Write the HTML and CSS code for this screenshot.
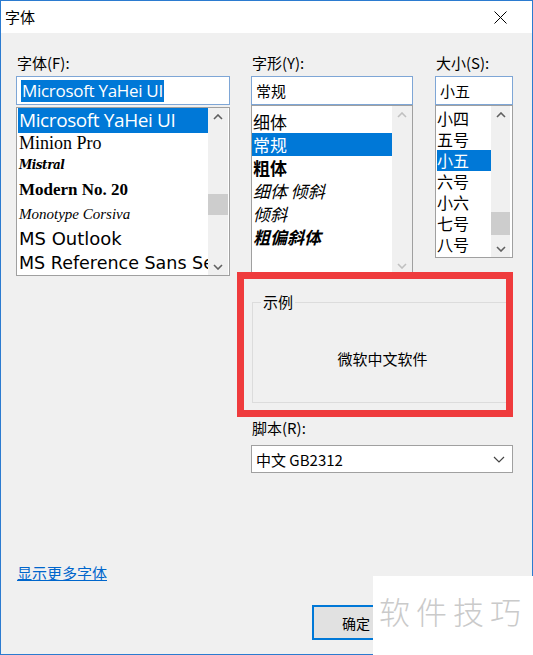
FILE: index.html
```html
<!DOCTYPE html>
<html lang="zh-CN">
<head>
  <meta charset="UTF-8" />
  <title>字体</title>
  <link rel="stylesheet" href="styles.css">
</head>
<body>

  <div class="window">
    <div class="titlebar">
      <span class="title">字体</span>
      <svg class="close" width="13" height="13" viewBox="0 0 13 13">
        <path d="M0.5 0.5 L12.5 12.5 M12.5 0.5 L0.5 12.5" stroke="#000" stroke-width="1" fill="none" />
      </svg>
    </div>

    <div class="content">
      <div class="columns">

        <div class="col col-font">
          <div class="label">字体(F):</div>
          <div class="input"><span class="sel-text font-input">Microsoft YaHei UI</span></div>
          <div class="list list-font">
            <div class="rows">
              <div class="row f-yahei selected">Microsoft YaHei UI</div>
              <div class="row f-minion">Minion Pro</div>
              <div class="row f-mistral">Mistral</div>
              <div class="row f-modern">Modern No. 20</div>
              <div class="row f-corsiva">Monotype Corsiva</div>
              <div class="row f-outlook">MS Outlook</div>
              <div class="row f-ref">MS Reference Sans Serif</div>
            </div>
            <div class="scrollbar">
              <div class="arrow"><svg width="10" height="6" viewBox="0 0 10 6"><path d="M1 5 L5 1 L9 5" /></svg></div>
              <div class="track"><div class="thumb thumb-font"></div></div>
              <div class="arrow"><svg width="10" height="6" viewBox="0 0 10 6"><path d="M1 1 L5 5 L9 1" /></svg></div>
            </div>
          </div>
        </div>

        <div class="right">
          <div class="top-row">
            <div class="col col-style">
              <div class="label">字形(Y):</div>
              <div class="input"><span class="plain-text">常规</span></div>
              <div class="list list-style">
                <div class="rows">
                  <div class="row">细体</div>
                  <div class="row selected">常规</div>
                  <div class="row s-bold">粗体</div>
                  <div class="row s-italic">细体 倾斜</div>
                  <div class="row s-italic">倾斜</div>
                  <div class="row s-bold s-italic">粗偏斜体</div>
                </div>
                <div class="scrollbar disabled">
                  <div class="arrow"><svg width="10" height="6" viewBox="0 0 10 6"><path d="M1 5 L5 1 L9 5" /></svg></div>
                  <div class="track"></div>
                  <div class="arrow"><svg width="10" height="6" viewBox="0 0 10 6"><path d="M1 1 L5 5 L9 1" /></svg></div>
                </div>
              </div>
            </div>

            <div class="col col-size">
              <div class="label">大小(S):</div>
              <div class="input"><span class="plain-text">小五</span></div>
              <div class="list list-size">
                <div class="rows">
                  <div class="row">小四</div>
                  <div class="row">五号</div>
                  <div class="row selected">小五</div>
                  <div class="row">六号</div>
                  <div class="row">小六</div>
                  <div class="row">七号</div>
                  <div class="row">八号</div>
                </div>
                <div class="scrollbar">
                  <div class="arrow"><svg width="10" height="6" viewBox="0 0 10 6"><path d="M1 5 L5 1 L9 5" /></svg></div>
                  <div class="track"><div class="thumb thumb-size"></div></div>
                  <div class="arrow"><svg width="10" height="6" viewBox="0 0 10 6"><path d="M1 1 L5 5 L9 1" /></svg></div>
                </div>
              </div>
            </div>
          </div>

          <fieldset class="sample">
            <legend>示例</legend>
            <div class="sample-text">微软中文软件</div>
          </fieldset>

          <div class="label script-label">脚本(R):</div>
          <div class="select">
            <span>中文 GB2312</span>
            <svg width="12" height="7" viewBox="0 0 12 7"><path d="M1 1 L6 6 L11 1" stroke="#444" stroke-width="1.2" fill="none" /></svg>
          </div>
        </div>

      </div>

      <a class="more-link" href="#">显示更多字体</a>

      <div class="buttons">
        <button class="btn default">确定</button>
        <button class="btn">取消</button>
      </div>
    </div>
  </div>

  <!-- 标注框和水印 -->
  <div class="highlight-box"></div>
  <div class="watermark">软件技巧</div>

</body>
</html>
```

FILE: styles.css
```css
body {
  margin: 0;
  width: 533px;
  height: 655px;
  position: relative;
  overflow: hidden;
  background: #f0f0f0;
  font-family: "Noto Sans CJK SC", "Noto Sans", sans-serif;
  font-size: 15px;
  color: #000;
}
.window {
  height: 655px;
  box-sizing: border-box;
  border: 1px solid #2b7bd0;
  display: flex;
  flex-direction: column;
}
.titlebar {
  height: 32px;
  background: #fff;
  display: flex;
  align-items: center;
  justify-content: space-between;
  padding: 0 25px 0 4px;
  flex-shrink: 0;
}
.title { font-size: 15px; line-height: 20px; }

.content {
  flex: 1;
  display: flex;
  flex-direction: column;
  padding: 20px 0 0 15px;
}
.columns {
  display: flex;
  gap: 21px;
}
.label {
  height: 20px;
  line-height: 20px;
  padding-left: 1px;
  font-size: 15px;
}
.input {
  margin-top: 3px;
  height: 29px;
  box-sizing: border-box;
  border: 1px solid #7ea6d6;
  background: #fff;
  display: flex;
  align-items: center;
  padding-left: 4px;
}
.sel-text {
  background: #0078d7;
  color: #fff;
  line-height: 22px;
  padding: 0 1px;
}
.font-input {
  font-family: "Open Sans", sans-serif;
  font-size: 17px;
  letter-spacing: -0.3px;
}
.plain-text { font-size: 15px; }

.col-font { width: 214px; }
.right { width: 262px; }
.top-row {
  display: flex;
  gap: 22px;
}
.col-style { width: 162px; }
.col-size { width: 78px; }

.list {
  background: #fff;
  border: 1px solid #a0a0a0;
  box-sizing: border-box;
  display: flex;
  overflow: hidden;
}
.list-font { margin-top: 2px; height: 169px; padding: 0 1px 0 1px; }
.list-style { height: 170px; }
.list-size { height: 153px; padding-left: 1px; }

.rows {
  flex: 1;
  min-width: 0;
  overflow: hidden;
  white-space: nowrap;
}
.row {
  padding-left: 1px;
  overflow: hidden;
}
.row.selected {
  background: #0078d7;
  color: #fff;
}

.list-style .row { height: 23px; line-height: 23px; font-size: 17px; }
.list-style .rows { padding-top: 4px; }
.s-bold { font-weight: bold; }
.s-italic { font-style: italic; }

.list-size .row { height: 21px; line-height: 21px; font-size: 16px; padding-left: 0; }
.list-size .rows { padding-top: 2px; }

.f-yahei { height: 25px; line-height: 25px; font-family: "Open Sans", sans-serif; font-size: 19px; letter-spacing: -0.4px; }
.f-minion { height: 21px; line-height: 21px; font-family: "Liberation Serif", serif; font-size: 18px; }
.f-mistral { height: 22px; line-height: 22px; font-family: "DejaVu Serif", serif; font-style: italic; font-weight: bold; font-size: 12px; letter-spacing: -0.5px; }
.f-modern { height: 27px; line-height: 27px; font-family: "Liberation Serif", serif; font-weight: bold; font-size: 17px; }
.f-corsiva { height: 23px; line-height: 23px; font-family: "Liberation Serif", serif; font-style: italic; font-size: 15px; }
.f-outlook { height: 26px; line-height: 26px; font-family: "DejaVu Sans", sans-serif; font-size: 18px; }
.f-ref { height: 22px; line-height: 22px; font-family: "DejaVu Sans", sans-serif; font-size: 17.5px; }

.scrollbar {
  width: 20px;
  flex-shrink: 0;
  background: #f0f0f0;
  display: flex;
  flex-direction: column;
}
.list-size .scrollbar { width: 19px; margin-right: 2px; }
.arrow {
  height: 17px;
  display: flex;
  align-items: center;
  justify-content: center;
}
.arrow path {
  stroke: #606060;
  stroke-width: 1.6;
  fill: none;
}
.disabled .arrow path { stroke: #c0c0c0; }
.track { flex: 1; }
.thumb { background: #cdcdcd; }
.thumb-font { margin-top: 69px; height: 21px; }
.thumb-size { margin-top: 89px; height: 23px; }

.sample {
  margin: 17px 0 0 1px;
  padding: 0;
  height: 111px;
  box-sizing: border-box;
  border: 1px solid #dcdcdc;
  min-width: 0;
}
.sample legend {
  margin-left: 8px;
  padding: 0 2px;
  line-height: 20px;
  font-size: 15px;
}
.sample-text {
  text-align: center;
  font-size: 15px;
  line-height: 20px;
  margin-top: 37px;
}
.script-label { margin-top: 15px; }
.select {
  margin-top: 7px;
  height: 28px;
  box-sizing: border-box;
  border: 1px solid #a0a0a0;
  background: #fff;
  display: flex;
  align-items: center;
  justify-content: space-between;
  padding: 0 7px 0 4px;
  font-size: 15px;
}

.more-link {
  margin-top: 90px;
  align-self: flex-start;
  color: #0066cc;
  text-decoration: underline;
  font-size: 15px;
  line-height: 20px;
  padding-left: 1px;
}

.buttons {
  display: flex;
  gap: 12px;
  margin-top: 22px;
  padding-left: 296px;
}
.btn {
  width: 88px;
  height: 35px;
  box-sizing: border-box;
  border: 1px solid #adadad;
  background: #e1e1e1;
  font-family: "Noto Sans CJK SC", sans-serif;
  font-size: 14px;
  padding: 0;
}
.btn.default { border: 2px solid #0078d7; }

.highlight-box {
  position: absolute;
  left: 237px;
  top: 272px;
  width: 276px;
  height: 145px;
  box-sizing: border-box;
  border: 7px solid #ef3b3d;
}
.watermark {
  position: absolute;
  right: 0;
  bottom: 0;
  width: 160px;
  height: 79px;
  background: #fff;
  color: #cacaca;
  font-size: 31px;
  font-weight: 300;
  letter-spacing: 6px;
  padding-left: 6px;
  padding-bottom: 6px;
  line-height: 70px;
  box-sizing: border-box;
  white-space: nowrap;
}
```
